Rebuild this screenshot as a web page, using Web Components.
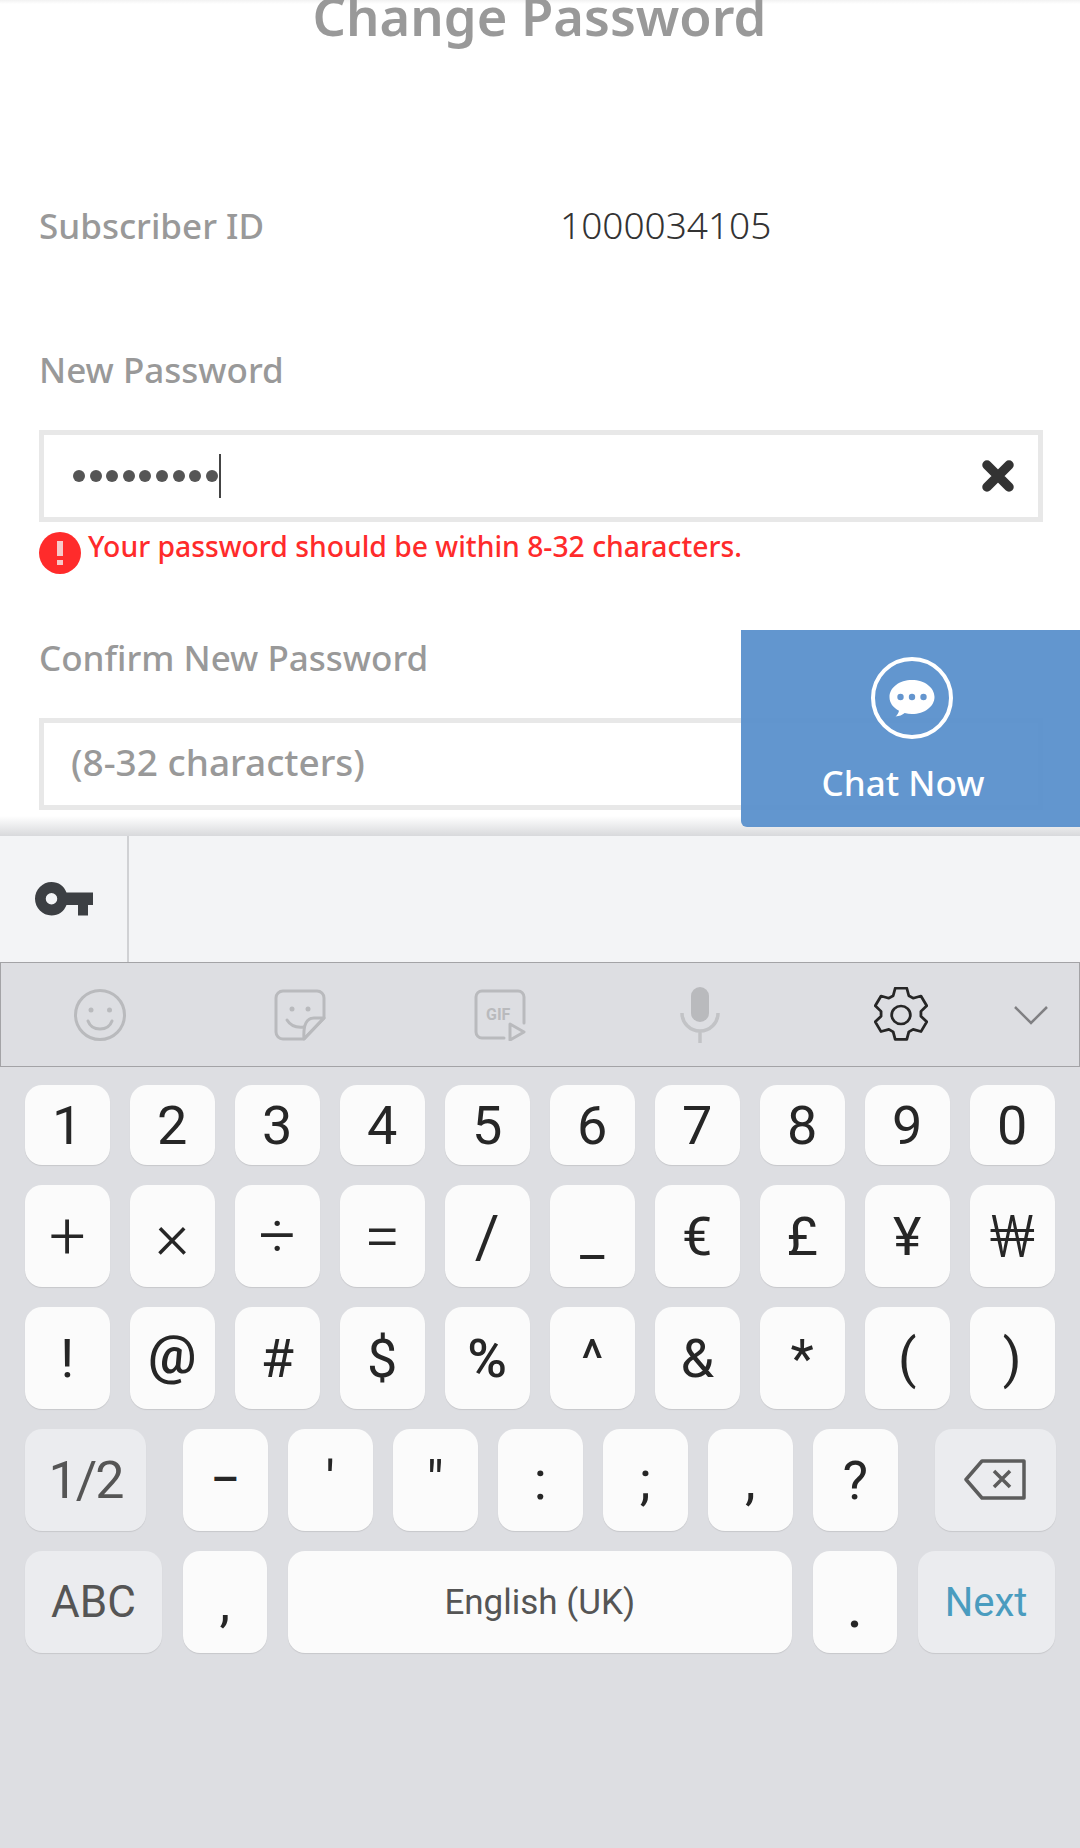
<!DOCTYPE html>
<html>
<head>
<meta charset="utf-8">
<style>
  html, body { margin: 0; padding: 0; background: #fff; }
  body { width: 1080px; height: 1848px; overflow: hidden; }
</style>
</head>
<body>
<change-password></change-password>
<app-keyboard></app-keyboard>

<script>
class $Field extends HTMLElement {
  connectedCallback() {
    const shadow = this.attachShadow({mode: "open"});
    shadow.innerHTML = `
      <style>
        :host { display: flex; align-items: center; box-sizing: border-box; height: 92px; border: 5px solid #e8e8e8; background: #fff; padding: 0 23px 0 27px; }
        .grow { flex: 1; display: flex; align-items: center; font-size: 37px; line-height: 50px; font-weight: 500; color: #999; }
        .lift { margin-top: -4px; }
      </style>
      <div class="grow"><slot></slot></div>
      <slot name="end"></slot>
    `;
  }
}
customElements.define("app-field", $Field);

class $ChatNow extends HTMLElement {
  connectedCallback() {
    const shadow = this.attachShadow({mode: "open"});
    shadow.innerHTML = `
      <style>
        :host { position: absolute; left: 741px; top: 630px; width: 339px; height: 197px; box-sizing: border-box; display: block; background: rgba(90,144,204,.95); border-bottom-left-radius: 6px; color: #fff; }
        .wrap { display: flex; flex-direction: column; align-items: center; padding: 26px 15px 0 0; box-sizing: border-box; }
        svg { display: block; margin-left: 18px; }
        .label { margin-top: 21px; font-size: 35px; font-weight: 500; line-height: 44px; }
      </style>
      <div class="wrap">
        <svg width="84" height="84" viewBox="0 0 84 84">
          <circle cx="42" cy="42" r="39" fill="none" stroke="#fff" stroke-width="4"/>
          <path d="M42 24c12.500 0 22.500 7.500 22.500 17S54.500 58 42 58c-2.500 0-5-.3-7.300-.9-2.300 2-5.400 3.200-9.200 3.500 1.700-1.500 3-3.400 3.500-5.900C23 51.700 19.500 46.800 19.500 41c0-9.500 10-17 22.500-17z" fill="#fff"/>
          <circle cx="30.500" cy="41" r="3.200" fill="#6495ce"/>
          <circle cx="42" cy="41" r="3.200" fill="#6495ce"/>
          <circle cx="53.500" cy="41" r="3.200" fill="#6495ce"/>
        </svg>
        <div class="label">Chat Now</div>
      </div>
    `;
  }
}
customElements.define("chat-now", $ChatNow);

class $ChangePassword extends HTMLElement {
  connectedCallback() {
    const shadow = this.attachShadow({mode: "open"});
    shadow.innerHTML = `
      <style>
        :host { display: block; position: relative; height: 836px; overflow: hidden; box-sizing: border-box; font-family: "Noto Sans", "Liberation Sans", sans-serif; background: linear-gradient(#f2f2f2, #fff 4px); }
        .inner { padding: 0 37px 0 39px; }
        h1 { margin: -18px 0 0; text-align: center; font-size: 52.500px; line-height: 68px; font-weight: 600; color: #999; height: 214px; padding-right: 3px; box-sizing: border-box; }
        .row { display: flex; height: 60px; align-items: center; }
        .label { color: #999; font-weight: 500; font-size: 35px; line-height: 44px; }
        .row .label { width: 521px; }
        .value { color: #333; font-weight: 300; font-size: 37px; line-height: 50px; padding-bottom: 2px; }
        .gap1 { height: 92px; }
        .caret { width: 2.500px; height: 44px; background: #444; margin-left: 1px; }
        .dots { display: flex; gap: 4.600px; margin-left: 2px; }
        .dots i { width: 12px; height: 12px; border-radius: 50%; background: #555; display: block; }
        .error { display: flex; color: #ff2b2b; font-size: 28.300px; font-weight: 500; height: 104px; margin-top: 10px; }
        .error svg { flex: none; margin: 0 7px 0 0; }
        .error span { line-height: 28px; }
        .label.second, .label.first { margin-bottom: 38px; }
        .hint { padding-bottom: 4px; }
        .shade { position: absolute; left: 0; right: 0; bottom: 0; height: 20px; background: linear-gradient(rgba(214,215,218,0), rgba(214,215,218,.95)); }
      </style>
      <div class="inner">
        <h1>Change Password</h1>
        <div class="row"><div class="label">Subscriber ID</div><div class="value">1000034105</div></div>
        <div class="gap1"></div>
        <div class="label first">New Password</div>
        <app-field>
          <div class="dots"><i></i><i></i><i></i><i></i><i></i><i></i><i></i><i></i><i></i></div><div class="caret"></div>
          <svg slot="end" width="34" height="34" viewBox="0 0 34 34"><path d="M6 6l22 22M28 6L6 28" stroke="#333" stroke-width="9.500" stroke-linecap="round" fill="none"/></svg>
        </app-field>
        <div class="error">
          <svg width="42" height="42" viewBox="0 0 42 42"><circle cx="21" cy="21" r="21" fill="#ff2b2b"/><rect x="18" y="9" width="6" height="15" fill="#f7c9c9"/><rect x="18" y="28" width="6" height="5" fill="#f7c9c9"/></svg>
          <span>Your password should be within 8-32 characters.</span>
        </div>
        <div class="label second">Confirm New Password</div>
        <app-field><span class="hint">(8-32 characters)</span></app-field>
      </div>
      <div class="shade"></div>
      <chat-now></chat-now>
    `;
  }
}
customElements.define("change-password", $ChangePassword);

class $Key extends HTMLElement {
  connectedCallback() {
    const shadow = this.attachShadow({mode: "open"});
    shadow.innerHTML = `
      <style>
        :host { display: flex; align-items: center; justify-content: center; box-sizing: border-box; height: var(--h, 102px); width: var(--w, 84.500px); flex: none; background: #fbfbfb; border-radius: 17px; box-shadow: 0 1px 1px rgba(0,0,0,.1); color: #262626; font-size: var(--f, 54px); font-family: Roboto, "Liberation Sans", sans-serif; }
        :host([fn]) { background: #ebecef; color: #555; }
        :host([blue]) { color: #4a9cbf; }
      </style>
      <slot></slot>
    `;
  }
}
customElements.define("kb-key", $Key);

class $KeyRow extends HTMLElement {
  connectedCallback() {
    const shadow = this.attachShadow({mode: "open"});
    shadow.innerHTML = `
      <style>
        :host { display: flex; gap: 20.500px; }
      </style>
      <slot></slot>
    `;
  }
}
customElements.define("kb-row", $KeyRow);

// glyphs that sit larger or higher on the real keyboard than plain Roboto
const keyStyles = {
  "+": "--f:65px;font-weight:300", "×": "--f:65px;font-weight:300", "÷": "--f:65px;font-weight:300", "=": "--f:65px;font-weight:300",
  "/": "--f:60px", "₩": "--f:60px;font-weight:300",
  "@": "padding-bottom:8px;font-weight:500",
  "%": "font-weight:500",
};

class $Keyboard extends HTMLElement {
  keyRow(keys) {
    return keys.split(" ").map((k) => `<kb-key style="${keyStyles[k] || ""}">${k}</kb-key>`).join("");
  }

  connectedCallback() {
    const shadow = this.attachShadow({mode: "open"});
    const stroke = "#b9babd";
    shadow.innerHTML = `
      <style>
        :host { display: block; height: 1012px; background: #dddee2; font-family: Roboto, "Liberation Sans", sans-serif; }
        .bar { height: 126px; background: #f3f4f6; display: flex; }
        .keycell { width: 127px; border-right: 2px solid #d0d1d4; display: flex; align-items: center; justify-content: center; }
        .tools { height: 105px; box-sizing: border-box; border: 1px solid #a3a3a6; display: grid; grid-template-columns: 197px 204px 196px 204px 198px 62px 1fr; align-items: center; justify-items: center; }
        .keys { padding: 18px 0 0 25px; display: flex; flex-direction: column; gap: 20px; }
        .keys > .top { --h: 80px; }
        .space { --w: 504.500px; --f: 35px; color: #555; }
        .abc { --f: 44px; }
        .next { --f: 40px; }
        .half { --f: 52px; letter-spacing: -2px; }
        .dot { padding-top: 12px; font-weight: 500; }
      </style>
      <div class="bar">
        <div class="keycell">
          <svg width="58" height="34" viewBox="0 0 58 34"><path d="M16.500 0C23.500 0 29 4 31.500 10.500H58V23h-5v10.500H43V23H31.500C29 29.500 23.500 33.500 16.500 33.500 7.500 33.500 0 26 0 16.800S7.500 0 16.500 0zm0 11a5.700 5.700 0 1 0 0 11.500 5.700 5.700 0 0 0 0-11.500z" fill="#3c3f43"/></svg>
        </div>
      </div>
      <div class="tools">
        <svg width="52" height="54" viewBox="0 0 52 54" fill="none" stroke="${stroke}" stroke-width="3"><circle cx="26" cy="27" r="24.500"/><circle cx="17" cy="22" r="2.500" fill="${stroke}" stroke="none"/><circle cx="35.500" cy="22" r="2.500" fill="${stroke}" stroke="none"/><path d="M14 33c2 5.500 7 8 12 8s10-2.500 12-8" stroke-linecap="round"/></svg>
        <svg width="52" height="52" viewBox="0 0 52 52" fill="none" stroke="${stroke}" stroke-width="3"><path d="M30 50H9a7 7 0 0 1-7-7V9a7 7 0 0 1 7-7h34a7 7 0 0 1 7 7v20L30 50z" stroke-linejoin="round"/><path d="M50 29H40c-7 0-11 6-10 21z" stroke-linejoin="round"/><circle cx="18" cy="20" r="2.500" fill="${stroke}" stroke="none"/><circle cx="34" cy="20" r="2.500" fill="${stroke}" stroke="none"/><path d="M13 31c3 5 9 8 17 7" stroke-linecap="round"/></svg>
        <svg width="52" height="52" viewBox="0 0 52 52" fill="none" stroke="${stroke}" stroke-width="3"><path d="M30 49H8a6 6 0 0 1-6-6V8a6 6 0 0 1 6-6h36a6 6 0 0 1 6 6v26" stroke-linecap="round"/><path d="M36 35l14 8-14 8z" stroke-linejoin="round"/><text x="12" y="31" font-size="16" font-weight="700" fill="${stroke}" stroke="none" font-family="Roboto, sans-serif">GIF</text></svg>
        <svg width="40" height="56" viewBox="0 0 40 56" fill="none"><rect x="11" y="0" width="18" height="35" rx="9" fill="${stroke}"/><path d="M2 26c0 10 8 18 18 18s18-8 18-18M20 44v12" stroke="#c2c3c6" stroke-width="3.500"/></svg>
        <svg width="54" height="56" viewBox="1.300 .5 21.400 23" preserveAspectRatio="none" fill="none" stroke="#262626" stroke-width="1.100" stroke-linejoin="round"><path d="M9.700 1h4.600l.8 3.100 1.700 1 3.100-.9 2.300 4-2.300 2.300v2l2.300 2.300-2.300 4-3.100-.9-1.700 1-.8 3.100H9.700l-.8-3.100-1.700-1-3.100.9-2.300-4 2.300-2.300v-2L1.800 8.200l2.300-4 3.100.9 1.700-1z"/><circle cx="12" cy="12" r="3.700"/></svg>
        <svg width="34" height="20" viewBox="0 0 34 20" fill="none" stroke="#808083" stroke-width="2.500"><path d="M1 2l16 16L33 2"/></svg>
      </div>
      <div class="keys">
        <kb-row class="top">${this.keyRow("1 2 3 4 5 6 7 8 9 0")}</kb-row>
        <kb-row>${this.keyRow("+ × ÷ = / _ € £ ¥ ₩")}</kb-row>
        <kb-row>${this.keyRow("! @ # $ % ^ &amp; * ( )")}</kb-row>
        <kb-row>
          <kb-key fn class="half" style="--w:121px">1/2</kb-key>
          <kb-key style="margin-left:16.500px;--f:44px;font-weight:500">–</kb-key>
          ${this.keyRow("' &quot; : ; , ?")}
          <kb-key fn style="--w:121px;margin-left:16.500px">
            <svg width="62" height="42" viewBox="0 0 62 42" fill="none" stroke="#5c5c5c" stroke-width="3.500"><path d="M18 2h42v37H18L2 20.500z" stroke-linejoin="round"/><path d="M30 12l16 16M46 12L30 28"/></svg>
          </kb-key>
        </kb-row>
        <kb-row>
          <kb-key fn style="--w:137px" class="abc">ABC</kb-key>
          <kb-key>,</kb-key>
          <kb-key class="space">English (UK)</kb-key>
          <kb-key class="dot">.</kb-key>
          <kb-key fn blue style="--w:137px" class="next">Next</kb-key>
        </kb-row>
      </div>
    `;
  }
}
customElements.define("app-keyboard", $Keyboard);
</script>
</body>
</html>
